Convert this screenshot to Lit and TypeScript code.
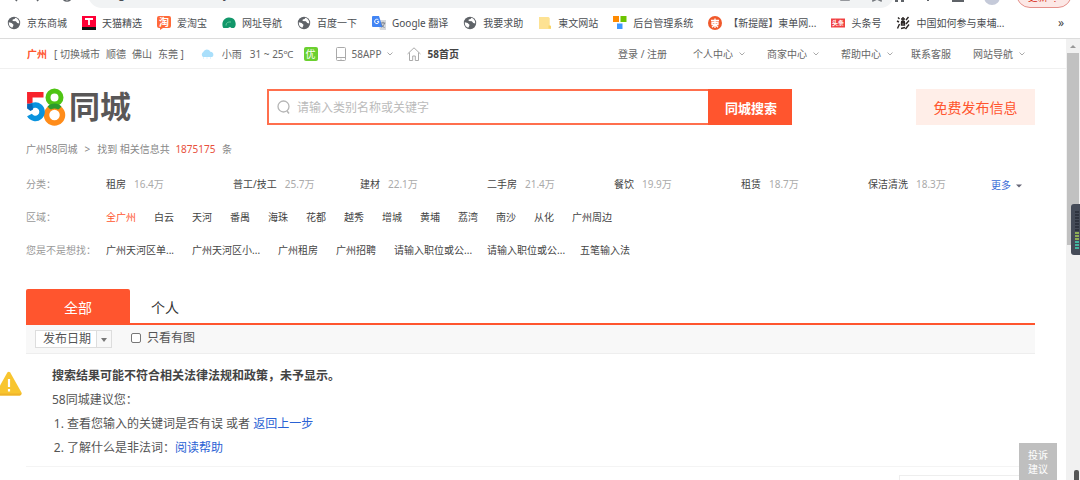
import { LitElement, html, css, svg } from "lit";
import { customElement, state } from "lit/decorators.js";

const globe = svg`<circle cx="7" cy="7" r="6.2" fill="#5f6368"/><path d="M1.8 6.2 4.6 7l1.9 1.7-.3 1.4-.9 1.7C3 11.200 1.600 9 1.800 6.200ZM8.300 1.700 7.600 3 5.700 3.400 5.600 5l3.200.2 1.500 1.900 1.900.4c.3-2.700-1.100-5.100-3.900-5.800Z" fill="#fff"/>`;

const icons: Record<string, unknown> = {
  globe,
  tmall: svg`<path d="M0 0h14v11H0z" fill="#ff0036"/><path d="M0 11h14v3H0z" fill="#111"/><path d="M3 3h8M7 3v6" stroke="#fff" stroke-width="1.800" fill="none"/>`,
  taobao: svg`<path d="M2 0h10a2 2 0 0 1 2 2v8a2 2 0 0 1-2 2H6l-3 2v-2H2a2 2 0 0 1-2-2V2a2 2 0 0 1 2-2Z" fill="#ff6a3a"/><text x="2" y="9.500" font-size="10" font-weight="700" fill="#fff">淘</text>`,
  nav: svg`<path d="M1 11.500C-.8 7 1.500 2 6.500 1.500c4.500-.3 7.200 2.600 7.200 6.500 0 2-.7 3-1.700 4H9.500L8 11l-2 1H1.500Z" fill="#12976a"/><path d="M4 9.500c-.2-2.500 2-4 5-3.500" stroke="#63c79b" fill="none"/>`,
  translate: svg`<path d="M5 4h9v10H8Z" fill="#d5d8dc"/><path d="M1 0h6l3.500 11H1a1 1 0 0 1-1-1V1a1 1 0 0 1 1-1Z" fill="#4285f4"/><path d="M6.500 4A2.200 2.200 0 1 0 7 5.700H5" fill="none" stroke="#fff"/><path d="M8.800 7h4.500M11 5.800V7m1.500 0c-.5 2-1.500 3.500-3 4.300m0-3c.6 1.600 1.600 2.500 3 3.200" fill="none" stroke="#6d7580" stroke-width=".8"/>`,
  folder: svg`<path d="M1 1h9.500l1.200 1v7l1.300 1v3H1Z" fill="#fde293"/><path d="M10.500 9.500 13 10v2.500h-2.500Z" fill="#f8d568"/>`,
  blocks: svg`<path d="M0 0h6v6H0z" fill="#ff8a00"/><path d="M7.500 0h6v6h-6z" fill="#6cc400"/><path d="M4 7.500h5.500V13H4z" fill="#3f98ff"/>`,
  cambo: svg`<circle cx="7" cy="7" r="7" fill="#f0592b"/><path d="M3 4.500h8M7 2.500V12M4 6.500h6v2H4zM7 8.500l-3 2.800M7 8.500l3 2.800" stroke="#fff" stroke-width="1.300" fill="none"/>`,
  toutiao: svg`<path d="M0 2.500h14v9H0z" fill="#f04142"/><text x="1" y="9.200" font-size="6" font-weight="700" fill="#fff">头条</text>`,
  ink: svg`<path d="M2 1.500 3.500 3M1 5l2 1M1.500 12.500 3.500 8M5 3h4M7 1v4M5 5.500h4M5.500 7h3v2h-3zM5 12.500l4-1M12.500 1l-2.500 3M13 4.500l-3 3.500M13 8.500 9.500 13" stroke="#2b2625" stroke-width="1.400" fill="none"/>`,
};

const bookmarks: [string, string][] = [
  ["globe", "京东商城"],
  ["tmall", "天猫精选"],
  ["taobao", "爱淘宝"],
  ["nav", "网址导航"],
  ["globe", "百度一下"],
  ["translate", "Google 翻译"],
  ["globe", "我要求助"],
  ["folder", "柬文网站"],
  ["blocks", "后台管理系统"],
  ["cambo", "【新提醒】柬单网..."],
  ["toutiao", "头条号"],
  ["ink", "中国如何参与柬埔..."],
];

const categories: [string, string][] = [
  ["租房", "16.4万"],
  ["普工/技工", "25.7万"],
  ["建材", "22.1万"],
  ["二手房", "21.4万"],
  ["餐饮", "19.9万"],
  ["租赁", "18.7万"],
  ["保洁清洗", "18.3万"],
];

const districts = ["全广州", "白云", "天河", "番禺", "海珠", "花都", "越秀", "增城", "黄埔", "荔湾", "南沙", "从化", "广州周边"];
const suggestions = ["广州天河区单...", "广州天河区小...", "广州租房", "广州招聘", "请输入职位或公...", "请输入职位或公...", "五笔输入法"];

const chevron = html`<svg class="chevron" viewBox="0 0 6 4" aria-hidden="true"><path d="M.5.500 3 3 5.500.500" fill="none" stroke="#aaa"/></svg>`;

const base = css`
  * { box-sizing: border-box; }
  a { color: inherit; text-decoration: none; }
  svg { display: block; flex: none; }
  button, input, select { font: inherit; margin: 0; }
`;

@customElement("browser-bar")
class BrowserBar extends LitElement {
  static styles = [base, css`
    :host { display: block; background: #fff; border-bottom: 1px solid #dcdcdc; color: #4a4d51; }
    .address-row { display: flex; height: 8px; overflow: hidden; align-items: flex-end; padding: 0 8px; }
    .back-forward { width: 80px; height: 28px; }
    .address { flex: 1; max-width: 813px; height: 28px; border-radius: 14px; background: #f1f3f4; display: flex; align-items: center; padding: 0 10px 0 12px; gap: 12px; }
    .lock { width: 6px; height: 10px; background: #777b80; border-radius: 1px; }
    .url { display: flex; flex: 1; gap: 40px; font-size: 12px; line-height: 16px; white-space: pre; }
    .address-icons { width: 44px; height: 28px; }
    .tools { display: flex; align-items: flex-end; gap: 16px; height: 28px; margin-left: auto; }
    .extensions { width: 74px; height: 28px; }
    .avatar { width: 16px; height: 16px; border-radius: 50%; background: #c5cad9; margin-bottom: 3px; }
    .update { width: 56px; height: 28px; border: 1px solid #e5908a; border-radius: 14px; background: #fce8e6; color: #d93025; font-size: 10px; line-height: 12px; padding: 6px 0 0; white-space: nowrap; }
    .bookmarks { display: flex; align-items: center; height: 30px; padding: 0 16px 0 7px; gap: 15px; font-size: 10px; line-height: 16px; white-space: nowrap; }
    .bookmark { display: flex; align-items: center; gap: 6px; }
    .icon { width: 14px; height: 14px; }
    .more { margin-left: auto; border: 0; padding: 0; background: none; color: #444; font-size: 12px; }
  `];

  render() {
    return html`
      <div class="address-row">
        <svg class="back-forward" viewBox="0 0 80 28" aria-hidden="true"><path d="M9 11 4 16l5 5M29 11l5 5-5 5M63 13a5 5 0 1 1-8 0" fill="none" stroke="#5f6368" stroke-width="1.500"/></svg>
        <div class="address">
          <span class="lock"></span>
          <span class="url"><span>gz.58.com/sou/?key=</span><span>柬埔寨</span></span>
          <svg class="address-icons" viewBox="0 0 44 28" aria-hidden="true"><path d="M1 12h8v8H1ZM37 12l5 3-1 6-4-2-4 2-1-6Z" fill="none" stroke="#777b80" stroke-width="1.500"/></svg>
        </div>
        <div class="tools">
          <svg class="extensions" viewBox="0 0 74 28" aria-hidden="true"><path d="M1 13h9v9H7v-3H4v3H1ZM58 13h12v9H58ZM33 13h2v8h-2Z" fill="#5f6368"/></svg>
          <span class="avatar"></span><button class="update">更新 ⋮</button>
        </div>
      </div>
      <nav class="bookmarks">
        ${bookmarks.map(([icon, label]) => html`<a class="bookmark" href="#"><svg class="icon" viewBox="0 0 14 14" aria-hidden="true">${icons[icon]}</svg><span>${label}</span></a>`)}
        <button class="more">»</button>
      </nav>`;
  }
}

@customElement("site-toolbar")
class SiteToolbar extends LitElement {
  static styles = [base, css`
    :host { display: flex; align-items: center; justify-content: space-between; height: 30px; padding: 0 41px 0 27px; border-bottom: 1px solid #f0f0f0; color: #666; font-size: 10px; line-height: 16px; white-space: nowrap; }
    .group, .item { display: flex; align-items: center; }
    .item { gap: 6px; }
    .city { color: #ff552e; font-weight: 700; }
    .cities { display: flex; gap: 6px; margin: 0 16px 0 7px; }
    .weather { gap: 8px; margin-right: 18px; }
    .cloud { width: 14px; height: 11px; }
    .air { width: 14px; height: 14px; margin-left: 2px; line-height: 14px; border-radius: 2px; background: #6bd02f; color: #fff; text-align: center; }
    .phone { width: 10px; height: 14px; }
    .home-icon { width: 14px; height: 14px; }
    .app { margin-right: 14px; }
    .home { font-weight: 700; color: #444; }
    .chevron { width: 6px; height: 4px; }
    .links { gap: 22px; }
    .login { margin-right: 4px; }
    .service { margin-left: -4px; }
  `];

  render() {
    return html`
      <div class="group">
        <span class="city">广州</span>
        <span class="cities"><span>[ <a href="#">切换城市</a></span><a href="#">顺德</a><a href="#">佛山</a><span><a href="#">东莞</a> ]</span></span>
        <span class="item weather">
          <svg class="cloud" viewBox="0 0 14 11" aria-hidden="true"><path d="M3 9a3 3 0 0 1 .3-5C4.500.800 9 .500 10.300 3.800 14 3.600 14.500 9 11 9Z" fill="#a9dffb"/><path d="M3 10h1M6.500 10h1M10 10h1" stroke="#bfe8fc"/></svg>
          <span>小雨</span><span>31 ~ 25℃</span><span class="air">优</span>
        </span>
        <a class="item app" href="#"><svg class="phone" viewBox="0 0 10 14" aria-hidden="true"><rect x=".5" y=".5" width="9" height="13" rx="1" fill="none" stroke="#aaa"/><path d="M1 10.500h8M4.500 12.200h1" stroke="#aaa"/></svg>58APP ${chevron}</a>
        <a class="item home" href="#"><svg class="home-icon" viewBox="0 0 14 14" aria-hidden="true"><path d="M.5 7 7 .8 13.500 7M2.500 5.500v8h3.200V9h2.600v4.500h3.200v-8" fill="none" stroke="#aaa"/></svg>58首页</a>
      </div>
      <nav class="group links">
        <span class="login"><a href="#">登录</a> / <a href="#">注册</a></span>
        <a class="item" href="#">个人中心${chevron}</a>
        <a class="item" href="#">商家中心${chevron}</a>
        <a class="item" href="#">帮助中心${chevron}</a>
        <a class="service" href="#">联系客服</a>
        <a class="item" href="#">网站导航${chevron}</a>
      </nav>`;
  }
}

@customElement("site-header")
class SiteHeader extends LitElement {
  static styles = [base, css`
    :host { display: flex; align-items: center; padding-top: 20px; }
    .logo { display: flex; align-items: center; gap: 3px; width: 241px; height: 36px; color: #595757; font: 700 31px/34px "Noto Sans CJK SC", sans-serif; }
    .mark { width: 40px; height: 38px; }
    .name { padding-bottom: 4px; }
    .search { display: flex; flex: 1; max-width: 525px; height: 36px; }
    .field { display: flex; flex: 1; align-items: center; gap: 6px; padding-left: 8px; border: 2px solid #ff6f4d; border-right: 0; }
    .lens { width: 14px; height: 14px; }
    .query { flex: 1; min-width: 0; border: 0; outline: 0; padding: 0; font-size: 12px; color: #333; background: none; }
    .query::placeholder { color: #bbb; opacity: 1; }
    .submit { width: 84px; border: 0; padding: 0 0 0 2px; background: #ff552e; color: #fff; font-size: 13px; font-weight: 700; }
    .publish { margin-left: auto; width: 119px; height: 36px; border: 0; padding: 0; background: #ffeee8; color: #ff552e; font-size: 14px; }
  `];

  render() {
    return html`
      <a class="logo" href="#">
        <svg class="mark" viewBox="0 0 40 38" aria-hidden="true" fill="none">
          <path d="M17.500 6.800H3.800v9" stroke="#f7232c" stroke-width="5.500"/>
          <circle cx="28.500" cy="27" r="8" stroke="#ff8c1a" stroke-width="5.500"/>
          <circle cx="28.500" cy="9.500" r="6.500" stroke="#4fc414" stroke-width="5"/>
          <path d="M21.500 18.500a9.500 9.500 0 0 1 14 0q-2.500 3-3.500 3a6.500 6.500 0 0 0-7 0q-1 0-3.500-3Z" fill="#2c9a2c"/>
          <path d="M3.500 27A6.700 6.700 0 1 0 3.500 20.500" stroke="#0a93de" stroke-width="5.500"/>
          <path d="M1.100 15.800h5.400v1.500l.5 4.200-2.500 1.500-3.400-2.500Z" fill="#0668b8"/>
        </svg>
        <span class="name">同城</span>
      </a>
      <form class="search" @submit=${(e: Event) => e.preventDefault()}>
        <label class="field">
          <svg class="lens" viewBox="0 0 14 14" aria-hidden="true"><circle cx="6.500" cy="6.500" r="5.500" fill="none" stroke="#b5b5b5" stroke-width="1.300"/><path d="m10 11 2 2.500" stroke="#b5b5b5" stroke-width="1.500"/></svg>
          <input class="query" type="text" aria-label="搜索" placeholder="请输入类别名称或关键字">
        </label>
        <button class="submit">同城搜索</button>
      </form>
      <button class="publish">免费发布信息</button>`;
  }
}

@customElement("search-filters")
class SearchFilters extends LitElement {
  static styles = [base, css`
    :host { display: block; font-size: 10px; color: #444; white-space: nowrap; }
    .crumbs { display: flex; gap: 7px; margin: 14px 0 9px; line-height: 20px; color: #888; }
    .total { color: #e8503c; margin: 0 4px 0 3px; }
    .row { display: flex; line-height: 33px; }
    .label { width: 80px; flex: none; color: #999; }
    .categories { flex: 1; display: grid; grid-template-columns: repeat(6, minmax(0, 127fr)) minmax(0, 123fr) minmax(0, 44fr); }
    .count { margin-left: 8px; color: #aaa; }
    .more { display: flex; align-items: center; gap: 5px; padding-top: 2px; line-height: 31px; color: #3a6bd6; }
    .arrow { width: 6px; height: 4px; }
    .list { display: flex; gap: 18px; }
    .hint { max-width: 75px; }
    .active { color: #ff552e; }
  `];

  render() {
    return html`
      <div class="crumbs"><a href="#">广州58同城</a><span>&gt;</span><span>找到 相关信息共 <span class="total">1875175</span> 条</span></div>
      <div class="row"><span class="label">分类：</span>
        <div class="categories">
          ${categories.map(([name, count]) => html`<a href="#">${name}<span class="count">${count}</span></a>`)}
          <a class="more" href="#">更多<svg class="arrow" viewBox="0 0 6 4" aria-hidden="true"><path d="M0 .500h6l-3 3Z" fill="#667"/></svg></a>
        </div>
      </div>
      <div class="row"><span class="label">区域：</span>
        <div class="list">${districts.map((name, i) => html`<a class=${i === 0 ? "active" : ""} href="#">${name}</a>`)}</div>
      </div>
      <div class="row"><span class="label">您是不是想找：</span>
        <div class="list">${suggestions.map((name) => html`<a class="hint" href="#">${name}</a>`)}</div>
      </div>`;
  }
}

@customElement("search-results")
class SearchResults extends LitElement {
  static styles = [base, css`
    :host { display: block; margin-top: 22px; color: #555; font-size: 12px; }
    .tabs { display: flex; height: 36px; border-bottom: 2px solid #ff552e; }
    .tab { border: 0; background: none; padding: 2px 21px 0; font-size: 14px; color: #333; }
    .tab.selected { width: 104px; border-radius: 2px 2px 0 0; background: #ff552e; color: #fff; }
    .options { display: flex; align-items: center; gap: 19px; height: 29px; padding: 0 9px; background: #f8f8f8; border-bottom: 1px solid #eee; }
    .sort { position: relative; width: 77px; height: 18px; }
    .sort-select { appearance: none; width: 100%; height: 100%; padding: 0 0 0 7px; border: 1px solid #ddd; border-radius: 0; background: #fff; color: #555; line-height: 16px; }
    .sort-arrow { position: absolute; top: 1px; right: 1px; width: 15px; height: 16px; pointer-events: none; }
    .pictures { display: flex; align-items: center; gap: 6px; padding-bottom: 2px; line-height: 18px; }
    .box { appearance: none; width: 10px; height: 10px; border: 1px solid #777; border-radius: 2px; background: #fff; }
    .box:checked { background: #ff552e; }
    .notice { position: relative; padding: 10px 26px 6px; line-height: 24px; border-bottom: 1px solid #f4f4f4; }
    .warning { position: absolute; left: -31px; top: 17px; width: 28px; height: 26px; }
    .title, .intro, .steps { margin: 0; font-size: 12px; }
    .title { color: #444; }
    .steps { padding-left: 15px; }
    .link { color: #2a62d4; }
    .aside { width: 136px; height: 20px; margin: 8px 0 0 auto; border: 1px solid #eee; }
  `];

  @state() private tab = 0;

  render() {
    return html`
      <div class="tabs" role="tablist">
        ${["全部", "个人"].map((name, i) => html`<button class="tab ${i === this.tab ? "selected" : ""}" role="tab" aria-selected=${i === this.tab} @click=${() => (this.tab = i)}>${name}</button>`)}
      </div>
      <div class="options">
        <div class="sort">
          <select class="sort-select" aria-label="排序"><option>发布日期</option></select>
          <svg class="sort-arrow" viewBox="0 0 15 16" aria-hidden="true"><path d="M0 0h15v16H0Z" fill="#f8f8f8"/><path d="M.5 0v16" stroke="#ddd"/><path d="M5 7h6l-3 4Z" fill="#777"/></svg>
        </div>
        <label class="pictures"><input class="box" type="checkbox">只看有图</label>
      </div>
      <section class="notice">
        <svg class="warning" viewBox="0 0 28 26" aria-hidden="true"><path d="M12.500 1.200Q14 .200 15.200 1.500L26.500 21.500Q27 24 25 24.500H2Q0 24 1 21.500Z" fill="#f8c52f"/><path d="M1 22.500h25.500q-.3 1.800-2 2H3q-1.800 0-2-2Z" fill="#efb32a"/><path d="M14 8v8M14 18v2.500" stroke="#fff" stroke-width="2.200"/></svg>
        <h2 class="title">搜索结果可能不符合相关法律法规和政策，未予显示。</h2>
        <p class="intro">58同城建议您：</p>
        <ol class="steps">
          <li>查看您输入的关键词是否有误 或者 <a class="link" href="#">返回上一步</a></li>
          <li>了解什么是非法词：<a class="link" href="#">阅读帮助</a></li>
        </ol>
      </section>
      <div class="aside"></div>`;
  }
}

@customElement("app-root")
class AppRoot extends LitElement {
  static styles = [base, css`
    :host { display: flex; flex-direction: column; position: relative; height: 100vh; overflow: hidden; background: #fff; font-family: "Noto Sans", "Noto Sans CJK SC", sans-serif; }
    .viewport { display: flex; flex: 1; min-height: 0; }
    .page { flex: 1; min-width: 0; overflow: hidden; }
    .content { padding: 0 31px 0 26px; }
    .scrollbar { width: 14px; background: #f1f1f1; padding: 0 1px; }
    .up { width: 12px; height: 14px; }
    .thumb { height: 192px; background: #c1c1c1; }
    .feedback { position: absolute; right: 23px; bottom: 0; width: 38px; height: 37px; padding: 0 8px; border: 0; background: #bfbfbf; color: #fff; font-size: 10px; line-height: 14px; }
    .meter { position: absolute; right: 0; top: 204px; width: 9px; height: 51px; }
    .handle { position: absolute; right: 1px; bottom: 0; width: 5px; height: 10px; border-radius: 2px 2px 0 0; background: #555; }
  `];

  render() {
    return html`
      <browser-bar></browser-bar>
      <div class="viewport">
        <main class="page">
          <site-toolbar></site-toolbar>
          <div class="content">
            <site-header></site-header>
            <search-filters></search-filters>
            <search-results></search-results>
          </div>
        </main>
        <div class="scrollbar">
          <svg class="up" viewBox="0 0 12 14" aria-hidden="true"><path d="M3 9h6L6 6Z" fill="#999"/></svg>
          <div class="thumb"></div>
        </div>
      </div>
      <button class="feedback">投诉建议</button>
      <svg class="meter" viewBox="0 0 9 51" aria-hidden="true"><rect width="12" height="51" rx="3" fill="#454b58"/><path d="M6 7v21" stroke="#2e333f" stroke-width="4" stroke-dasharray="2 1"/><path d="M6 28v9" stroke="#8fae55" stroke-width="4" stroke-dasharray="2 1"/><path d="M6 37v9" stroke="#43b5a0" stroke-width="4" stroke-dasharray="2 1"/></svg>
      <div class="handle"></div>`;
  }
}
